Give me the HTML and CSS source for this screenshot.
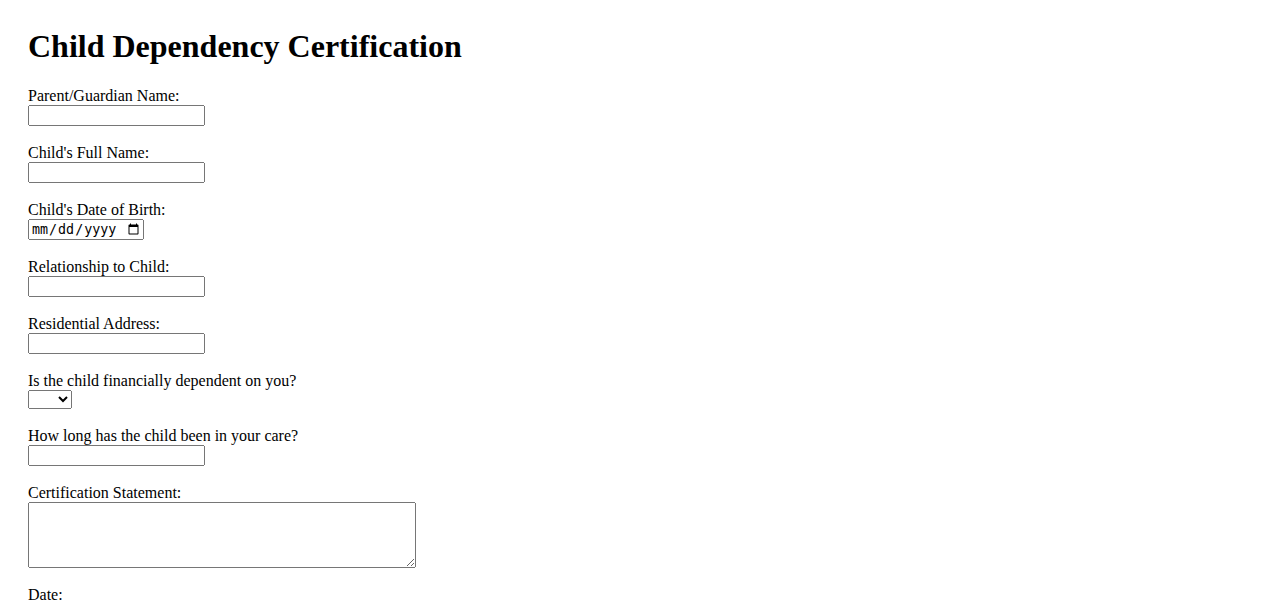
FILE: index.html
```html
<!DOCTYPE html>
<html lang="en">
<head>
<meta charset="utf-8">
<title>Child Dependency Certification</title>
<link rel="stylesheet" href="styles.css">
</head>
<body>
<div class="page">
<h1 class="title">Child Dependency Certification</h1>
<form class="form">
<div class="group">
<label for="parent" class="label">Parent/Guardian Name:</label>
<input type="text" id="parent" name="parent" class="control field">
</div>
<div class="group">
<label for="child" class="label">Child's Full Name:</label>
<input type="text" id="child" name="child" class="control field">
</div>
<div class="group">
<label for="dob" class="label">Child's Date of Birth:</label>
<input type="date" id="dob" name="dob" class="control datefield">
</div>
<div class="group">
<label for="rel" class="label">Relationship to Child:</label>
<input type="text" id="rel" name="rel" class="control field">
</div>
<div class="group">
<label for="addr" class="label">Residential Address:</label>
<input type="text" id="addr" name="addr" class="control field">
</div>
<div class="group">
<label for="dep" class="label">Is the child financially dependent on you?</label>
<select id="dep" name="dep" class="control sel"><option value=""></option><option>Yes</option><option>No</option></select>
</div>
<div class="group">
<label for="care" class="label">How long has the child been in your care?</label>
<input type="text" id="care" name="care" class="control field">
</div>
<div class="group">
<label for="stmt" class="label">Certification Statement:</label>
<textarea id="stmt" name="stmt" class="control statement"></textarea>
</div>
<div class="group">
<label for="date" class="label">Date:</label>
<input type="date" id="date" name="date" class="control datefield">
</div>
</form>
</div>
</body>
</html>
```

FILE: styles.css
```css
body {
  margin: 8px;
  font-family: "Liberation Serif", "Times New Roman", serif;
  font-size: 16px;
  color: #000;
  background: #fff;
}
.page {
  padding: 20px;
}
.title {
  font-size: 32px;
  font-weight: bold;
  margin: 0 0 22.2px 0;
}
.group {
  margin-bottom: 18px;
}
.label {
  display: block;
}
.control {
  display: block;
  margin: 0;
}
.field {
  width: 177px;
  height: 21px;
  box-sizing: border-box;
}
.datefield {
  width: 116px;
  height: 21px;
  box-sizing: border-box;
}
.sel {
  width: 44px;
  height: 19px;
  box-sizing: border-box;
}
.statement {
  width: 388px;
  height: 66px;
  box-sizing: border-box;
}
```
